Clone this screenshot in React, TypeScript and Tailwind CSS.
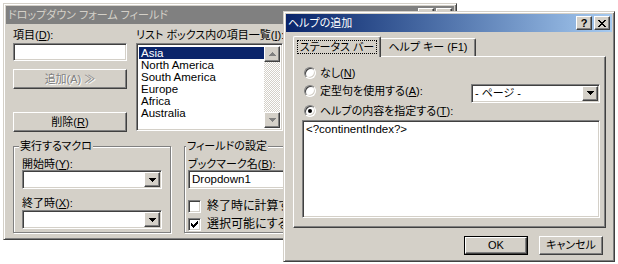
// Two overlapping Win2000-style dialogs: a drop-down form field dialog
// with the "add help" dialog open on top of it.

const FACE = "bg-[#d4d0c8]"
const raised =
  "border border-t-white border-l-white border-r-[#404040] border-b-[#404040] shadow-[inset_-1px_-1px_0_#808080]"
const sunken =
  "border border-t-[#808080] border-l-[#808080] border-r-white border-b-white shadow-[inset_1px_1px_0_#404040,inset_-1px_-1px_0_#d4d0c8]"
const frame =
  "border border-t-[#d4d0c8] border-l-[#d4d0c8] border-r-[#404040] border-b-[#404040] shadow-[inset_1px_1px_0_#ffffff,inset_-1px_-1px_0_#808080]"
const etched = "border border-[#808080] shadow-[inset_1px_1px_0_#ffffff,1px_1px_0_#ffffff]"
const font =
  "font-['Liberation_Sans','Noto_Sans_CJK_JP',sans-serif] [font-feature-settings:'palt'] text-[11px] leading-[13px] text-black"
const latin = "font-['Liberation_Sans',sans-serif] text-[11.5px]"

function Tri({ up = false, gray = false }: { up?: boolean; gray?: boolean }) {
  const fill = gray ? "#808080" : "#000000"
  const rows = [7, 5, 3, 1]
  return (
    <svg width="7" height="4" viewBox="0 0 7 4" shapeRendering="crispEdges">
      {rows.map((w, i) => (
        <rect key={i} x={(7 - w) / 2} y={up ? 3 - i : i} width={w} height={1} fill={fill} />
      ))}
    </svg>
  )
}

function Combo({ width, value }: { width: string; value?: string }) {
  return (
    <div className={`${sunken} ${width} h-[19px] bg-white flex items-stretch p-[1px]`}>
      <div className="flex-1 pl-[2px] flex items-center truncate">{value}</div>
      <div className={`${raised} ${FACE} w-[16px] flex items-center justify-center`}>
        <Tri />
      </div>
    </div>
  )
}

function CaptionButton({ children }: { children: React.ReactNode }) {
  return (
    <div className={`${raised} ${FACE} w-[16px] h-[14px] flex items-center justify-center text-black`}>{children}</div>
  )
}

function CloseGlyph() {
  return (
    <svg width="8" height="7" viewBox="0 0 8 7" shapeRendering="crispEdges">
      <path d="M0 0h2v1h1v1h2v-1h1v-1h2v1h-1v1h-1v1h-1v1h1v1h1v1h1v1h-2v-1h-1v-1h-2v1h-1v1h-2v-1h1v-1h1v-1h1v-1h-1v-1h-1v-1h-1z" fill="#000" />
    </svg>
  )
}

function Radio({ checked = false }: { checked?: boolean }) {
  return (
    <div className="w-[12px] h-[12px] shrink-0 rounded-full border border-t-[#808080] border-l-[#808080] border-r-white border-b-white shadow-[inset_1px_1px_0_#404040,inset_-1px_-1px_0_#d4d0c8] bg-white flex items-center justify-center">
      {checked && <div className="w-[4px] h-[4px] rounded-full bg-black" />}
    </div>
  )
}

function Checkbox({ checked = false }: { checked?: boolean }) {
  return (
    <div className={`${sunken} w-[13px] h-[13px] bg-white flex items-center justify-center shrink-0`}>
      {checked && (
        <svg width="7" height="7" viewBox="0 0 7 7" shapeRendering="crispEdges">
          <path d="M6 0h1v3h-1v1h-1v1h-1v1h-1v1h-1v-1h-1v-1h-1v-3h1v1h1v1h1v-1h1v-1h1z" fill="#000" />
        </svg>
      )}
    </div>
  )
}

const LIST_ITEMS = ["Asia", "North America", "South America", "Europe", "Africa", "Australia"]

function FormFieldDialog() {
  return (
    <div className={`absolute left-[3px] top-[3px] w-[454px] h-[237px] p-[2px] ${FACE} ${frame}`}>
      <div className="h-[18px] bg-[#808080] text-[#d4d0c8] flex items-center justify-between pl-[2px] pr-[2px]">
        <span>ドロップダウン フォーム フィールド</span>
        <div className="flex gap-[2px]">
          <CaptionButton>
            <span className="font-bold text-[#808080]">?</span>
          </CaptionButton>
          <CaptionButton>
            <CloseGlyph />
          </CaptionButton>
        </div>
      </div>

      <div className="pl-[7px] pt-[5px]">
        <div className="flex gap-[9px]">
          <div className="w-[114px] flex flex-col">
            <div className="h-[14px]">
              項目(<u>D</u>):
            </div>
            <div className={`${sunken} h-[18px] bg-white`} />
            <div
              className={`${raised} ${FACE} h-[20px] mt-[8px] flex items-center justify-center text-[#808080] [text-shadow:1px_1px_0_#ffffff]`}
            >
              追加(A) ≫
            </div>
            <div className={`${raised} ${FACE} h-[20px] mt-[23px] flex items-center justify-center`}>
              削除(<u>R</u>)
            </div>
          </div>

          <div className="flex flex-col">
            <div className="h-[14px]">
              リスト ボックス内の項目一覧(<u>I</u>):
            </div>
            <div className={`${sunken} w-[147px] h-[88px] bg-white flex p-[2px]`}>
              <div className={`flex-1 flex flex-col pt-[1px] ${latin} leading-[12px]`}>
                {LIST_ITEMS.map((item, i) => (
                  <div key={item} className={`pl-[2px] h-[12px] ${i === 0 ? "bg-[#0a246a] text-white" : ""}`}>
                    {item}
                  </div>
                ))}
              </div>
              <div className="w-[16px] flex flex-col bg-[repeating-conic-gradient(#d4d0c8_0_25%,#ffffff_0_50%)] bg-[length:2px_2px]">
                <div className={`${raised} ${FACE} h-[16px] flex items-center justify-center`}>
                  <Tri up gray />
                </div>
                <div className="flex-1" />
                <div className={`${raised} ${FACE} h-[16px] flex items-center justify-center`}>
                  <Tri gray />
                </div>
              </div>
            </div>
          </div>
        </div>

        <div className="flex gap-[13px] mt-[8px]">
          <fieldset className={`${etched} w-[158px] h-[93px] pl-[8px] pt-[5px]`}>
            <legend className={`${FACE} ml-[-3px] px-[1px]`}>実行するマクロ</legend>
            <div className="h-[12px]">
              開始時(<u>Y</u>):
            </div>
            <Combo width="w-[140px]" />
            <div className="h-[13px] mt-[8px]">
              終了時(<u>X</u>):
            </div>
            <Combo width="w-[140px]" />
          </fieldset>
          <fieldset className={`${etched} w-[260px] h-[93px] pl-[3px] pt-[5px]`}>
            <legend className={`${FACE} ml-[-2px] px-[1px]`}>フィールドの設定</legend>
            <div className="h-[12px]">
              ブックマーク名(<u>B</u>):
            </div>
            <div className={`${sunken} w-[200px] h-[19px] bg-white flex items-center pl-[3px] ${latin}`}>
              Dropdown1
            </div>
            <div className="flex items-center gap-[6px] mt-[10px] h-[14px] text-[12px]">
              <Checkbox />
              <span>終了時に計算する(C)</span>
            </div>
            <div className="flex items-center gap-[6px] mt-[4px] h-[14px] text-[12px]">
              <Checkbox checked />
              <span>選択可能にする(E)</span>
            </div>
          </fieldset>
        </div>
      </div>
    </div>
  )
}

function HelpDialog() {
  return (
    <div className={`absolute left-[283px] top-[11px] w-[332px] h-[251px] p-[2px] ${FACE} ${frame} flex flex-col`}>
      <div className="h-[18px] bg-linear-to-r from-[#0a246a] to-[#a6caf0] text-white flex items-center justify-between pl-[2px] pr-[2px]">
        <span>ヘルプの追加</span>
        <div className="flex gap-[2px]">
          <CaptionButton>
            <span className="font-bold font-['Liberation_Sans',sans-serif]">?</span>
          </CaptionButton>
          <CaptionButton>
            <CloseGlyph />
          </CaptionButton>
        </div>
      </div>

      <div className="pl-[7px] pr-[6px] pt-[4px] flex flex-col">
        <div className="flex items-end h-[20px] relative z-10">
          <div className={`border border-b-0 border-t-white border-l-white border-r-[#404040] shadow-[inset_-1px_0_0_#808080] ${FACE} w-[88px] h-[21px] mb-[-1px] flex items-center justify-center rounded-t-[2px]`}>
            <span className="border border-dotted border-black px-[2px] leading-[12px]">ステータス バー</span>
          </div>
          <div className={`border border-b-0 border-t-white border-l-0 border-r-[#404040] shadow-[inset_-1px_0_0_#808080] ${FACE} w-[95px] h-[18px] flex items-center justify-center rounded-tr-[2px]`}>
            ヘルプ キー (F1)
          </div>
        </div>
        <div className={`${raised} h-[172px] flex flex-col pl-[10px] pr-[5px] pt-[7px]`}>
          <div className="h-[18px] flex items-center gap-[4px]">
            <Radio />
            <span>
              なし(<u>N</u>)
            </span>
          </div>
          <div className="h-[18px] flex items-center">
            <div className="flex items-center gap-[4px] flex-1">
              <Radio />
              <span>
                定型句を使用する(<u>A</u>):
              </span>
            </div>
            <Combo width="w-[129px] mt-[4px]" value="- ページ -" />
          </div>
          <div className="h-[20px] flex items-center gap-[4px] pt-[2px]">
            <Radio checked />
            <span>
              ヘルプの内容を指定する(<u>T</u>):
            </span>
          </div>
          <div className={`${sunken} ml-[-2px] w-[298px] h-[98px] bg-white pl-[3px] pt-[2px] ${latin}`}>
            {"<?continentIndex?>"}
          </div>
        </div>
        <div className="flex justify-end gap-[11px] pr-[3px] mt-[8px]">
          <div className="border border-black">
            <div className={`${raised} ${FACE} w-[62px] h-[17px] flex items-center justify-center`}>OK</div>
          </div>
          <div className={`${raised} ${FACE} w-[64px] h-[19px] flex items-center justify-center`}>キャンセル</div>
        </div>
      </div>
    </div>
  )
}

export default function App() {
  return (
    <div className={`relative w-[618px] h-[264px] bg-white overflow-hidden ${font}`}>
      <FormFieldDialog />
      <HelpDialog />
    </div>
  )
}
